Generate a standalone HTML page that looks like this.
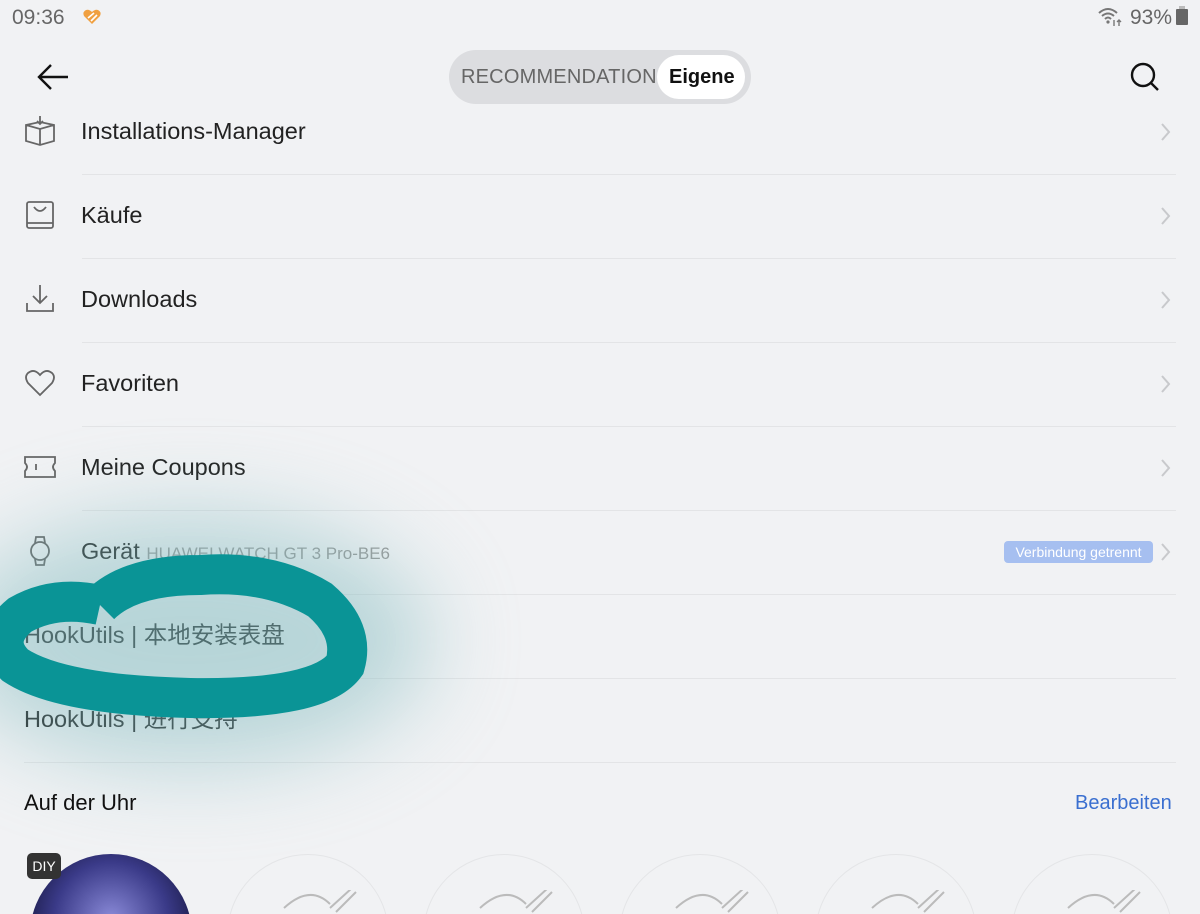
<!DOCTYPE html>
<html style="overflow:hidden;height:914px"><head><meta charset="utf-8"><style>
html,body{margin:0}
#w{width:1200px;height:914px;overflow:hidden;background:#f1f2f4;font-family:"Liberation Sans","Noto Sans CJK SC",sans-serif;position:relative;color:#1a1a1a}
.a{position:absolute}
.row{position:absolute;left:0;width:1200px;height:84px}
.row .t{position:absolute;left:81px;top:0;line-height:84px;font-size:23.5px;color:#222}
.sep{position:absolute;height:1px;background:#e3e4e6;right:24px}
.ic{position:absolute;left:22px;top:24px}
</style></head><body><div id="w">
<div class="a" style="left:12px;top:6px;font-size:21px;color:#666">09:36</div>
<svg class="a" style="left:82px;top:9px" width="20" height="16" viewBox="0 0 20 16"><path d="M10 15 L2 7 Q0 3 4 1 Q7 0 10 3 Q13 0 16 1 Q20 3 18 7Z" fill="#f0a040"/><path d="M6 9 L12 4 M9 12 L15 6" stroke="#fff" stroke-width="1.6"/></svg>
<svg class="a" style="left:1097px;top:7px" width="26" height="20" viewBox="0 0 26 20"><path d="M2 6 Q11 -2 20 6 M5 9 Q11 4 17 9 M8 12 Q11 9 14 12" stroke="#777" stroke-width="2" fill="none"/><circle cx="11" cy="15" r="1.6" fill="#777"/><path d="M17 13v6M22 19v-6M20 15l2-2 2 2" stroke="#777" stroke-width="1.4" fill="none"/></svg>
<div class="a" style="left:1130px;top:6px;font-size:21px;color:#666">93%</div>
<div class="a" style="left:1176px;top:9px;width:12px;height:16px;background:#666;border-radius:1px"></div>
<div class="a" style="left:1179px;top:6px;width:6px;height:3px;background:#bbb"></div>
<svg class="a" style="left:36px;top:62px" width="34" height="30" viewBox="0 0 34 30"><path d="M32 15H4M15 3L3 15 15 27" stroke="#111" stroke-width="2.4" fill="none"/></svg>
<div class="a" style="left:449px;top:50px;width:302px;height:54px;border-radius:27px;background:#dcdde0"></div>
<div class="a" style="left:461px;top:66px;font-size:20px;color:#666;letter-spacing:.2px">RECOMMENDATION</div>
<div class="a" style="left:657px;top:55px;width:88px;height:44px;border-radius:22px;background:#fff"></div>
<div class="a" style="left:669px;top:66px;font-size:20px;font-weight:bold;color:#111">Eigene</div>
<svg class="a" style="left:1128px;top:60px" width="34" height="34" viewBox="0 0 34 34"><circle cx="15" cy="15" r="11" stroke="#111" stroke-width="2.4" fill="none"/><path d="M23 23L30 30" stroke="#111" stroke-width="2.4"/></svg>

<div class="row" style="top:89px"><svg class="ic" width="36" height="36" viewBox="0 0 36 36" fill="none" stroke="#666" stroke-width="1.8"><path d="M4 12 L18 9 L32 12 V28 L18 32 L4 28Z M18 16V32 M4 12 L18 16 L32 12 M18 3v8 M15 8l3 3 3-3"/></svg><div class="t">Installations-Manager</div></div>
<div class="row" style="top:173px"><svg class="ic" width="36" height="36" viewBox="0 0 36 36" fill="none" stroke="#666" stroke-width="1.8"><rect x="5" y="5" width="26" height="26" rx="2"/><path d="M5 26H31M12 10Q18 18 24 10"/></svg><div class="t">Käufe</div></div>
<div class="row" style="top:257px"><svg class="ic" width="36" height="36" viewBox="0 0 36 36" fill="none" stroke="#666" stroke-width="1.8"><path d="M18 4V22M11 15l7 7 7-7M5 22V30H31V22"/></svg><div class="t">Downloads</div></div>
<div class="row" style="top:341px"><svg class="ic" width="36" height="36" viewBox="0 0 36 36" fill="none" stroke="#666" stroke-width="1.8"><path d="M18 30L6 18Q2 12 6 8Q12 3 18 10Q24 3 30 8Q34 12 30 18Z"/></svg><div class="t">Favoriten</div></div>
<div class="row" style="top:425px"><svg class="ic" width="36" height="36" viewBox="0 0 36 36" fill="none" stroke="#666" stroke-width="1.8"><path d="M3 8H33V14Q29 18 33 22V28H3V22Q7 18 3 14Z M14 15V21"/></svg><div class="t">Meine Coupons</div></div>
<div class="row" style="top:509px"><svg class="ic" width="36" height="36" viewBox="0 0 36 36" fill="none" stroke="#666" stroke-width="1.8"><circle cx="18" cy="18" r="9"/><path d="M13 10L14 4H22L23 10M13 26L14 32H22L23 26"/></svg><div class="t">Gerät <span style="font-size:17px;color:#999">HUAWEI WATCH GT 3 Pro-BE6</span></div>
<div class="a" style="left:1004px;top:32px;width:149px;height:22px;border-radius:4px;background:#a6bff0;color:#fff;font-size:14px;line-height:22px;text-align:center">Verbindung getrennt</div></div>
<div class="row" style="top:593px"><div class="t" style="left:24px">HookUtils | 本地安装表盘</div></div>
<div class="row" style="top:677px"><div class="t" style="left:24px">HookUtils | 进行支持</div></div>
<svg class="a" style="left:1160px;top:122px" width="12" height="620" viewBox="0 0 12 620" fill="none" stroke="#c8c9cc" stroke-width="2"><path d="M2 2l7 8-7 8M2 86l7 8-7 8M2 170l7 8-7 8M2 254l7 8-7 8M2 338l7 8-7 8M2 422l7 8-7 8"/></svg>
<div class="sep" style="left:82px;top:174px"></div><div class="sep" style="left:82px;top:258px"></div><div class="sep" style="left:82px;top:342px"></div><div class="sep" style="left:82px;top:426px"></div><div class="sep" style="left:82px;top:510px"></div><div class="sep" style="left:82px;top:594px"></div><div class="sep" style="left:24px;top:678px"></div><div class="sep" style="left:24px;top:762px"></div>

<div class="a" style="left:-50px;top:515px;width:480px;height:250px;border-radius:50%;background:#7fb9bd;opacity:.5;filter:blur(45px)"></div>
<svg class="a" style="left:0;top:450px" width="400" height="300" viewBox="0 -20 400 300">
<path d="M100 135 Q55 125 20 145 Q-10 170 15 195 Q60 225 190 228 Q320 230 345 195 Q355 160 320 130 Q270 100 200 105 Q130 105 100 135" fill="none" stroke="#0a9496" stroke-width="40"/></svg>

<div class="a" style="left:24px;top:790px;font-size:22px;color:#111">Auf der Uhr</div>
<div class="a" style="left:1075px;top:792px;font-size:20px;color:#3a6fd0">Bearbeiten</div>
<div class="a" style="left:30px;top:854px;width:162px;height:162px;border-radius:50%;background:radial-gradient(circle at 50% 40%,#8a8ad8,#3a3a88 45%,#101030 80%)"></div>
<div class="a" style="left:27px;top:853px;width:34px;height:26px;border-radius:5px;background:#333;color:#fff;font-size:14px;line-height:26px;text-align:center">DIY</div>
<div class="a" style="left:227px;top:854px;width:160px;height:160px;border-radius:50%;border:1px solid #e4e5e7"></div>
<div class="a" style="left:423px;top:854px;width:160px;height:160px;border-radius:50%;border:1px solid #e4e5e7"></div>
<div class="a" style="left:619px;top:854px;width:160px;height:160px;border-radius:50%;border:1px solid #e4e5e7"></div>
<div class="a" style="left:815px;top:854px;width:160px;height:160px;border-radius:50%;border:1px solid #e4e5e7"></div>
<div class="a" style="left:1011px;top:854px;width:160px;height:160px;border-radius:50%;border:1px solid #e4e5e7"></div>
<svg class="a" style="left:270px;top:890px" width="900" height="24" viewBox="0 0 900 24" fill="none" stroke="#bbb" stroke-width="2"><g id="p"><path d="M14 18Q40 -6 60 14M60 18L82 -2M66 22L86 2"/></g><use href="#p" x="196"/><use href="#p" x="392"/><use href="#p" x="588"/><use href="#p" x="784"/></svg>
</div></body></html>
